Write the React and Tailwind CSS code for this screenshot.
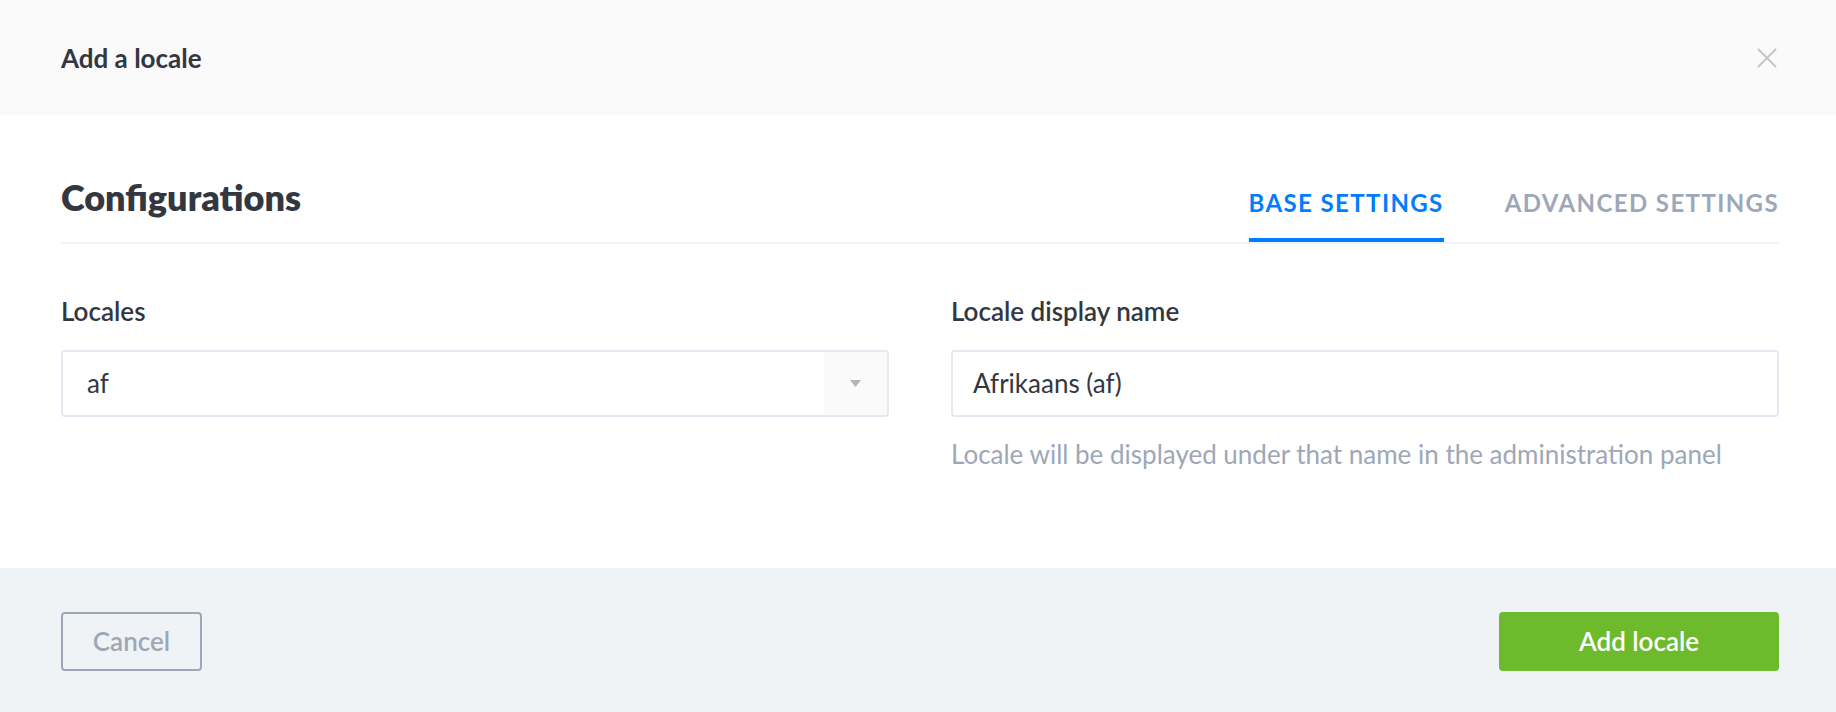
export default function App() {
  return (
    <div
      className="w-[1836px] h-[712px] flex flex-col bg-white text-[#333740]"
      style={{ fontFamily: "Lato, 'Noto Sans', sans-serif" }}
    >
      <div className="h-[115px] shrink-0 bg-[#fafafb] pl-[61px] pr-[59px] flex items-center justify-between">
        <div className="text-[26px] leading-[32px] font-bold text-[#333740]">Add a locale</div>
        <svg width="20" height="20" viewBox="0 0 20 20" className="text-[#c3c5c8]">
          <path d="M1 1 L19 19 M19 1 L1 19" stroke="currentColor" strokeWidth="2" fill="none" />
        </svg>
      </div>

      <div className="flex-1 pl-[61px] pr-[57px]">
        <div className="flex items-end justify-between border-b-2 border-[#f0f3f8] h-[129px]">
          <div className="text-[36px] leading-[44px] font-extrabold text-[#333740] pb-[23px]">Configurations</div>
          <div className="flex gap-[61px]">
            <div className="text-[24px] leading-[30px] font-bold tracking-[1.4px] text-[#007eff] pb-[20px] border-b-4 border-[#007eff] -mb-[2px] relative top-[-2px]">
              BASE SETTINGS
            </div>
            <div className="text-[24px] leading-[30px] font-bold tracking-[1.4px] text-[#9ea7b8] pb-[24px] -mb-[2px] relative top-[-2px]">
              ADVANCED SETTINGS
            </div>
          </div>
        </div>

        <div className="grid grid-cols-2 gap-[62px] mt-[51px]">
          <div>
            <div className="text-[26px] leading-[32px] font-semibold text-[#333740] mb-[23px]">Locales</div>
            <div className="h-[67px] border-2 border-[#e3e9f3] rounded-[4px] flex items-stretch bg-white">
              <div className="flex-1 flex items-center pl-[24px] text-[26px] text-[#333740]">af</div>
              <div className="w-[63px] bg-[#fafafb] flex items-center justify-center rounded-r-[3px]">
                <svg width="11" height="8" viewBox="0 0 11 8">
                  <path d="M0 0 L11 0 L5.5 7 Z" fill="#b3b5b9" />
                </svg>
              </div>
            </div>
          </div>
          <div>
            <div className="text-[26px] leading-[32px] font-semibold text-[#333740] mb-[23px]">Locale display name</div>
            <div className="h-[67px] border-2 border-[#e3e9f3] rounded-[4px] flex items-center pl-[20px] text-[26px] text-[#333740]">
              Afrikaans (af)
            </div>
            <div className="mt-[21px] text-[26px] leading-[32px] text-[#9ea7b8]">
              Locale will be displayed under that name in the administration panel
            </div>
          </div>
        </div>
      </div>

      <div className="h-[144px] shrink-0 bg-[#eff3f6] pl-[61px] pr-[57px] pt-[44px] flex justify-between items-start">
        <button className="w-[141px] h-[59px] border-2 border-[#9ea7b8] rounded-[4px] text-[26px] font-semibold text-[#9ea7b8] flex items-center justify-center">
          Cancel
        </button>
        <button className="w-[280px] h-[59px] bg-[#6dbb2c] rounded-[4px] text-[26px] font-semibold text-white flex items-center justify-center">
          Add locale
        </button>
      </div>
    </div>
  );
}
